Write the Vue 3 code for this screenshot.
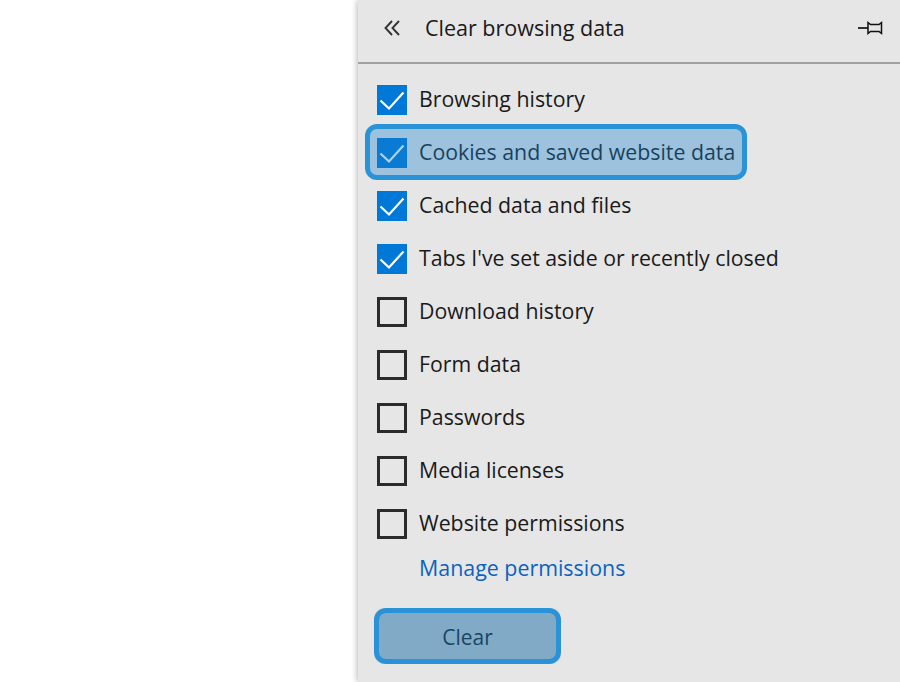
<script setup>
const options = [
    { label: "Browsing history", checked: true },
    { label: "Cookies and saved website data", checked: true, focus: true },
    { label: "Cached data and files", checked: true },
    { label: "Tabs I've set aside or recently closed", checked: true },
    { label: "Download history", checked: false },
    { label: "Form data", checked: false },
    { label: "Passwords", checked: false },
    { label: "Media licenses", checked: false },
    { label: "Website permissions", checked: false },
];
</script>

<template>
    <div class="page">
        <aside class="panel">
            <header class="panel-head">
                <svg class="back" width="16" height="16" viewBox="0 0 16 16" fill="none" stroke="#333" stroke-width="1.9">
                    <path d="M8 1 L1.5 8 L8 15" />
                    <path d="M15 1 L8.5 8 L15 15" />
                </svg>
                <h1 class="title">Clear browsing data</h1>
                <svg class="pin" width="26" height="16" viewBox="0 0 26 16" fill="none" stroke="#111" stroke-width="1.7">
                    <path d="M0 8 H10" />
                    <path d="M10 2.5 L12.5 4.5 H21 L23.5 2.5 V13.5 L21 11.5 H12.5 L10 13.5 Z" stroke-width="1.5" />
                </svg>
            </header>

            <ul class="options">
                <li v-for="opt in options" :key="opt.label" class="option">
                    <span class="box" :class="{ checked: opt.checked }">
                        <svg v-if="opt.checked" width="30" height="30" viewBox="0 0 30 30" fill="none" stroke="#fff" stroke-width="2.2">
                            <path d="M3.5 15.5 L12 23.5 L26.5 7.5" />
                        </svg>
                    </span>
                    <span class="label">{{ opt.label }}</span>
                    <span v-if="opt.focus" class="highlight"></span>
                </li>
            </ul>

            <a class="manage">Manage permissions</a>

            <div class="actions">
                <button class="clear">Clear</button>
                <span class="highlight btn-highlight"></span>
            </div>
        </aside>
    </div>
</template>

<style scoped>
.page {
    width: 900px;
    height: 682px;
    display: flex;
    justify-content: flex-end;
    background: #fff;
    overflow: hidden;
    font-family: "Open Sans", "Noto Sans", sans-serif;
}

.panel {
    width: 542px;
    height: 682px;
    background: #e6e6e6;
    box-shadow: -1px 0 6px rgba(0, 0, 0, 0.28);
    color: #1a1a1a;
}

.panel-head {
    height: 64px;
    display: flex;
    align-items: center;
    padding: 0 16px 6px 26px;
    box-sizing: border-box;
    border-bottom: 2px solid #a0a0a0;
}

.back {
    margin-right: 25px;
}

.title {
    flex: 1;
    margin: 0 0 1px;
    font-size: 21.5px;
    font-weight: 400;
}

.options {
    list-style: none;
    margin: 0;
    padding: 9px 0 0 19px;
}

.option {
    position: relative;
    height: 53px;
    display: flex;
    align-items: center;
    gap: 12px;
}

.box {
    width: 30px;
    height: 30px;
    box-sizing: border-box;
    border: 3px solid #2b2b2b;
    flex: none;
}

.box.checked {
    border: none;
    background: #0078d7;
}

.label {
    font-size: 21.3px;
    white-space: nowrap;
    padding-bottom: 2px;
}

.highlight {
    position: absolute;
    left: -12px;
    top: -2px;
    width: 382px;
    height: 56px;
    box-sizing: border-box;
    border: 5px solid #2a93d8;
    border-radius: 12px;
    background: rgba(25, 130, 205, 0.36);
}

.manage {
    display: block;
    margin: -2px 0 0 61px;
    height: 40px;
    line-height: 40px;
    font-size: 21.4px;
    color: #0a63c0;
}

.actions {
    position: relative;
    margin: 20px 0 0 16px;
    width: 187px;
    height: 56px;
}

.clear {
    width: 187px;
    height: 56px;
    border: none;
    border-radius: 10px;
    background: #cccccc;
    font-family: inherit;
    font-size: 21px;
    color: #1a1a1a;
    padding: 2px 0 0;
}

.btn-highlight {
    left: 0;
    top: 0;
    width: 187px;
    height: 56px;
    background: rgba(25, 125, 190, 0.42);
}
</style>
